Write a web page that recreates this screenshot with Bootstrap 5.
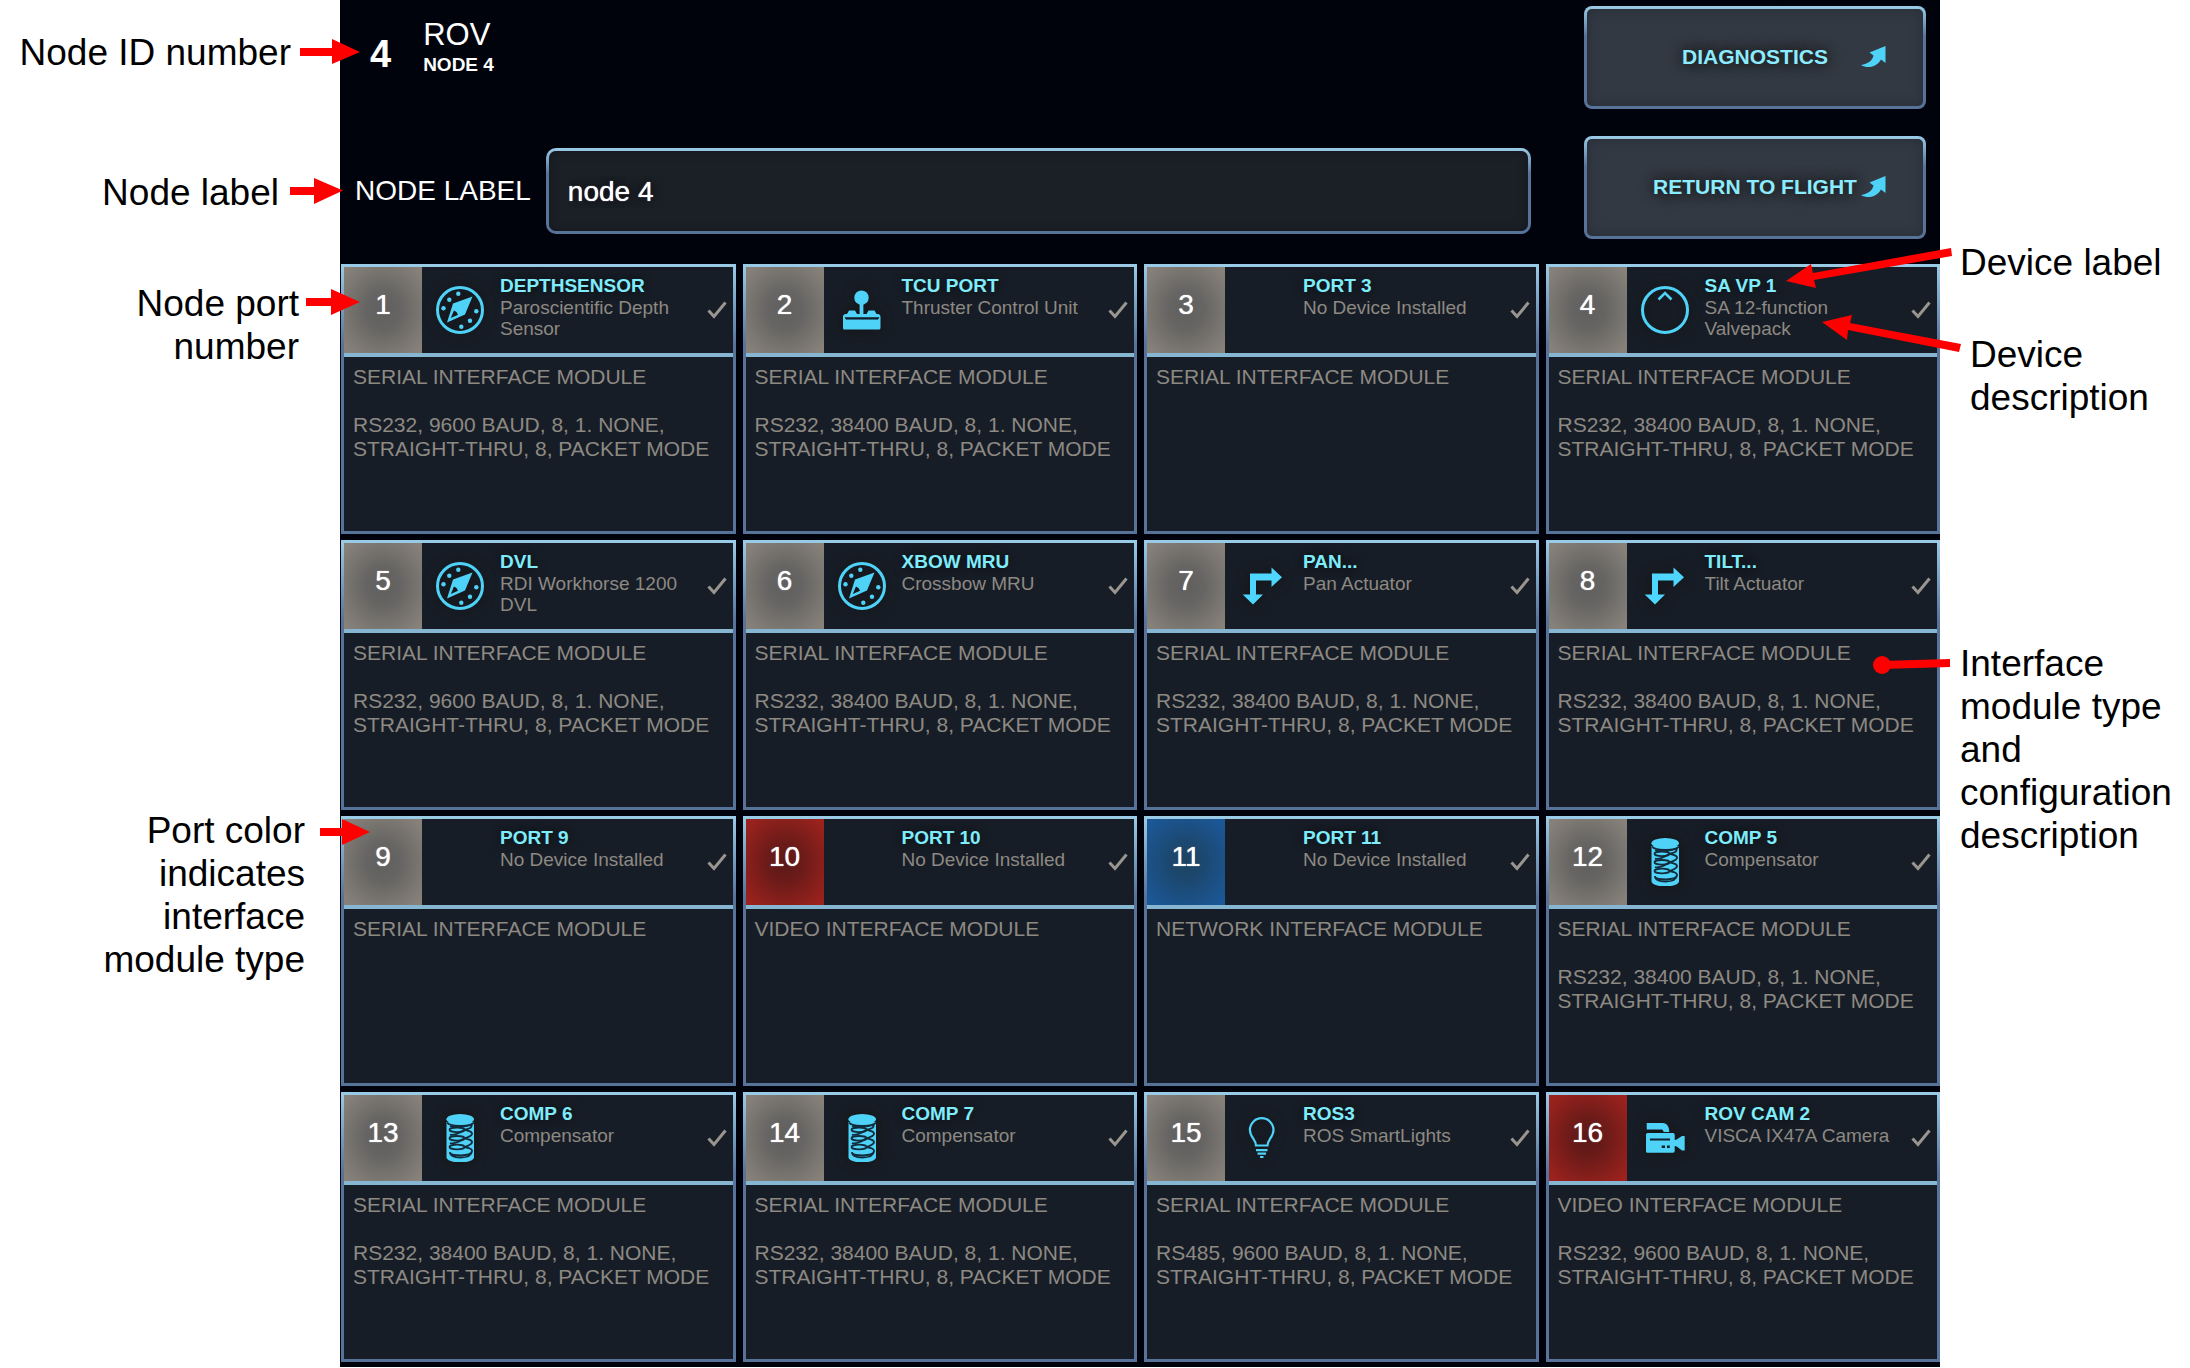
<!DOCTYPE html>
<html lang="en">
<head>
<meta charset="utf-8">
<meta name="viewport" content="width=device-width, initial-scale=1">
<title>ROV Node 4</title>
<link href="https://cdn.jsdelivr.net/npm/bootstrap@5.3.0/dist/css/bootstrap.min.css" rel="stylesheet">
<style>
:root{--edge-hi:#9accE8;--edge-lo:#58739a;--cyan:#4fd2f8;--dim:#8d8983;--fill:#171d26}
body{font-family:"Liberation Sans",Arial,sans-serif;background:#fff;color:#000}
.sheet{display:grid;grid-template-columns:minmax(0,340fr) minmax(0,1600fr) minmax(0,250fr)}
.note{font-size:37px;line-height:43px;margin:0}
.notes-left{padding-top:31px;text-align:right}
.notes-right{padding-top:241px;padding-left:20px}
.arrows{top:0;left:0;width:100%;pointer-events:none;z-index:5}
.console{background:#00030c;color:#fff;padding:6px 0 5px 1px}
.topbar{padding:0 14px 25px 0;gap:53px}
.ident{height:142px;padding:12px 0 0 29px;gap:32px}
.ident-num{font-size:38px;line-height:40px;font-weight:700}
.ident-name{font-size:31px;line-height:34px;font-weight:400;margin:0}
.ident-sub{font-size:19px;line-height:25px;font-weight:700}
.label-row{padding-left:14px;gap:15px;font-size:28px}
.edge{border:3px solid transparent;background:linear-gradient(var(--in),var(--in)) padding-box,linear-gradient(var(--edge-hi),var(--edge-lo) 30%,var(--edge-lo)) border-box}
.node-input,.node-input:focus{--in:#1b2027;font-size:28px;line-height:36px;height:86px;color:#fff;border-radius:10px;padding:2px 19px 0;box-shadow:inset 0 0 10px #14171c;text-shadow:0 0 1px #fff,0 0 12px #000;outline:0;flex:1 1 0;min-width:0}
.actions{width:342px;gap:27px}
.act{--in:#323943;height:103px;border-radius:8px;color:#8cecff;font-size:21px;line-height:24px;font-weight:700;display:grid;grid-template-columns:1fr auto 1fr;align-items:center;padding:0 37px 2px;text-shadow:0 0 14px #1c1a19,0 0 8px #221f1d;box-shadow:inset 0 0 12px rgba(30,36,44,.6)}
.act span{grid-column:2}
.act svg{justify-self:end;width:26px;height:22px;fill:var(--cyan)}
.ports{display:grid;grid-template-columns:repeat(4,minmax(0,1fr));gap:6px 7px}
.port{--in:var(--fill);min-height:270px;border-radius:0;color:var(--dim)}
.port-head{height:90px;border-bottom:4px solid #86b6d2}
.port-num{width:78px;flex:none;font-size:28px;line-height:32px;color:#fff;padding-bottom:10px;text-shadow:0 0 1px #fff;background:radial-gradient(closest-side,#5f5f5f,#666563 45%,#87817a 130%)}
.port-num.video{background:radial-gradient(closest-side,#5a1917,#6b1b19 45%,#9c221d 130%)}
.port-num.net{background:radial-gradient(closest-side,#1d425f,#1c4870 45%,#1b5898 130%)}
.port-icon{width:78px;flex:none;padding-right:2px}
.port-icon svg{width:48px;height:48px;filter:drop-shadow(0 0 6px #131313)}
.port-text{font-size:19px;line-height:21px;padding-top:8px}
.port-text h2{font-size:19px;line-height:22px;font-weight:700;color:#7eecfb;margin:0;text-shadow:0 0 10px #0b0d11}
.port-text p{margin:0}
.port-check{width:20px;height:18px;margin:0 6px 0 4px;flex:none;fill:none;stroke:#9a958f;stroke-width:3}
.port-body{padding:8px 6px 0 9px;font-size:21px;line-height:24px}
.port-body p{margin:0 0 24px}
</style>
</head>
<body>
<svg width="0" height="0" class="position-absolute" aria-hidden="true">
  <symbol id="i-compass" viewBox="0 0 48 48"><circle cx="24" cy="24" r="22.500" fill="none" stroke="#4fd2f8" stroke-width="3"/><g fill="#4fd2f8"><circle cx="22.300" cy="7.700" r="2.200"/><circle cx="13.300" cy="13.700" r="2.200"/><circle cx="7.500" cy="22.300" r="2.200"/><circle cx="40.300" cy="25.300" r="2.200"/><circle cx="34" cy="34.700" r="2.200"/><circle cx="25.300" cy="40.700" r="2.200"/><path fill-rule="evenodd" d="M36.500 10.500L17 17.500 11 36.500 29 28.500zM18 24.500L14.800 32 22 28.800 20.500 26z"/></g></symbol>
  <symbol id="i-joy" viewBox="0 0 48 48"><g fill="#4fd2f8"><circle cx="23.500" cy="11.700" r="7.200"/><path d="M21.600 17h3.800v12h-3.800z"/><path d="M5 42V31a3 3 0 0 1 3-3h1l2-3.600h6l2 3.600h9.500l2-3.600h6l2 3.600h1a3 3 0 0 1 3 3V42a1.500 1.500 0 0 1-1.500 1.500h-35A1.500 1.500 0 0 1 5 42z"/></g><path d="M7 31.600h34l-1 1.600H8z" fill="#10202c" stroke="#10202c" stroke-width=".6"/></symbol>
  <symbol id="i-turn" viewBox="0 0 48 48"><path fill="#4fd6ff" d="M11 11.500h21.500v-6L43 15.200 32.500 25v-6.500H17v14h7L14 42.500 3.700 32.500H11z"/></symbol>
  <symbol id="i-valve" viewBox="0 0 48 48"><g fill="none" stroke="#4fd2f8"><circle cx="24" cy="24" r="22.500" stroke-width="3"/><path d="M17.500 13.500L24 7l6.500 6.500" stroke-width="2.600"/></g></symbol>
  <symbol id="i-comp" viewBox="0 0 48 48"><path fill="#4fd2f8" d="M10.500 8h27.500v35c0 3.500-5.500 5.300-13.700 5.300s-13.800-1.800-13.800-5.300z"/><g fill="none" stroke="#132c3c" stroke-width="1.800"><path d="M11 8.500c3 4.500 24 4.500 27 0"/><ellipse cx="21" cy="15.800" rx="7.500" ry="2.300"/><ellipse cx="21" cy="24.300" rx="7.500" ry="2.300"/><ellipse cx="21" cy="33" rx="7.500" ry="2.300"/><path d="M14 12c5 1.500 17 1 21.500-1.500 1 4-4 4.500-7 5.300 4 .7 8 2 7.500 4.200s-4 3.300-7.500 4.300c4 .7 8 2 7.500 4.200s-4 3.300-7.500 4.500c4 .7 8 2 7.500 4.300s-5 4-11 4-10-1-11.500-2.500M14 38c0 4 4 5.500 10.500 5.500s11-2 11.500-6M14 20.500c3 1.500 10-1.500 14-4.500M14 29c3 1.500 10-1.500 14-4.500"/></g><ellipse cx="24.200" cy="5.200" rx="13.800" ry="5.200" fill="#4fd2f8"/></symbol>
  <symbol id="i-bulb" viewBox="0 0 48 48"><g fill="none" stroke="#4fd2f8" stroke-width="2.200"><path d="M17 31.500h11.500c0-6 6-8.500 6-15.500a11.800 11.800 0 0 0-23.600 0c0 7 6.100 9.500 6.100 15.500z"/><path d="M17 36.200h11.500M18.500 39.600h8.500M21 43h3.500"/></g></symbol>
  <symbol id="i-cam" viewBox="0 0 48 48"><path fill="#4fd2f8" d="M5.700 9h16c4.500 0 6.600 4 6.600 9H22.500c0-1.500-.8-2.500-2-2.500H5.700zM5 20.500q0-1.500 1.500-1.500H32q1.700 0 1.700 1.700V26l2-.500 5.300-3.500h2.700v14.500H41l-5.300-4-2-.500v5.100q0 1.700-1.700 1.700H6.500Q5 38.800 5 37.300z"/><path fill="#10202c" d="M9 24.600h20v2H9zM20.700 31.500H24V34h-3.300zM26 31.500h2.800V34H26z"/></symbol>
  <symbol id="i-check" viewBox="0 0 20 18"><path d="M1.500 9.500L7 15.500 18.500 1.500"/></symbol>
  <symbol id="i-go" viewBox="0 0 26 22"><path d="M25.500 0L9.500 6.500l4 3C12.500 14.500 8 18 1 19c7 4 16 2 20-5.500l4.500 3.500z"/></symbol>
</svg>

<div class="sheet position-relative">
  <aside class="notes-left">
    <p class="note" style="padding-right:49px">Node ID number</p>
    <p class="note" style="padding-right:61px;margin-top:97px">Node label</p>
    <p class="note" style="padding-right:41px;margin-top:68px">Node port<br>number</p>
    <p class="note" style="padding-right:35px;margin-top:441px">Port color<br>indicates<br>interface<br>module type</p>
  </aside>

  <main class="console">
    <header class="topbar d-flex">
      <div class="flex-grow-1">
        <div class="ident d-flex">
          <span class="ident-num pt-3">4</span>
          <div>
            <h1 class="ident-name">ROV</h1>
            <div class="ident-sub">NODE 4</div>
          </div>
        </div>
        <div class="label-row d-flex align-items-center">
          <label for="nodeLabel">NODE LABEL</label>
          <input id="nodeLabel" type="text" class="node-input edge" value="node 4">
        </div>
      </div>
      <div class="actions d-flex flex-column">
        <button type="button" class="btn act edge"><span>DIAGNOSTICS</span><svg><use href="#i-go"/></svg></button>
        <button type="button" class="btn act edge"><span>RETURN TO FLIGHT</span><svg><use href="#i-go"/></svg></button>
      </div>
    </header>

    <section class="ports">
      <article class="port edge">
        <div class="port-head d-flex"><div class="port-num d-flex align-items-center justify-content-center">1</div><div class="port-icon d-flex align-items-center justify-content-center"><svg><use href="#i-compass"/></svg></div><div class="port-text flex-grow-1"><h2>DEPTHSENSOR</h2><p>Paroscientific Depth Sensor</p></div><svg class="port-check align-self-center"><use href="#i-check"/></svg></div>
        <div class="port-body"><p>SERIAL INTERFACE MODULE</p><p>RS232, 9600 BAUD, 8, 1. NONE, STRAIGHT-THRU, 8, PACKET MODE</p></div>
      </article>
      <article class="port edge">
        <div class="port-head d-flex"><div class="port-num d-flex align-items-center justify-content-center">2</div><div class="port-icon d-flex align-items-center justify-content-center"><svg><use href="#i-joy"/></svg></div><div class="port-text flex-grow-1"><h2>TCU PORT</h2><p>Thruster Control Unit</p></div><svg class="port-check align-self-center"><use href="#i-check"/></svg></div>
        <div class="port-body"><p>SERIAL INTERFACE MODULE</p><p>RS232, 38400 BAUD, 8, 1. NONE, STRAIGHT-THRU, 8, PACKET MODE</p></div>
      </article>
      <article class="port edge">
        <div class="port-head d-flex"><div class="port-num d-flex align-items-center justify-content-center">3</div><div class="port-icon"></div><div class="port-text flex-grow-1"><h2>PORT 3</h2><p>No Device Installed</p></div><svg class="port-check align-self-center"><use href="#i-check"/></svg></div>
        <div class="port-body"><p>SERIAL INTERFACE MODULE</p></div>
      </article>
      <article class="port edge">
        <div class="port-head d-flex"><div class="port-num d-flex align-items-center justify-content-center">4</div><div class="port-icon d-flex align-items-center justify-content-center"><svg><use href="#i-valve"/></svg></div><div class="port-text flex-grow-1"><h2>SA VP 1</h2><p>SA 12-function<br>Valvepack</p></div><svg class="port-check align-self-center"><use href="#i-check"/></svg></div>
        <div class="port-body"><p>SERIAL INTERFACE MODULE</p><p>RS232, 38400 BAUD, 8, 1. NONE, STRAIGHT-THRU, 8, PACKET MODE</p></div>
      </article>

      <article class="port edge">
        <div class="port-head d-flex"><div class="port-num d-flex align-items-center justify-content-center">5</div><div class="port-icon d-flex align-items-center justify-content-center"><svg><use href="#i-compass"/></svg></div><div class="port-text flex-grow-1"><h2>DVL</h2><p>RDI Workhorse 1200 DVL</p></div><svg class="port-check align-self-center"><use href="#i-check"/></svg></div>
        <div class="port-body"><p>SERIAL INTERFACE MODULE</p><p>RS232, 9600 BAUD, 8, 1. NONE, STRAIGHT-THRU, 8, PACKET MODE</p></div>
      </article>
      <article class="port edge">
        <div class="port-head d-flex"><div class="port-num d-flex align-items-center justify-content-center">6</div><div class="port-icon d-flex align-items-center justify-content-center"><svg><use href="#i-compass"/></svg></div><div class="port-text flex-grow-1"><h2>XBOW MRU</h2><p>Crossbow MRU</p></div><svg class="port-check align-self-center"><use href="#i-check"/></svg></div>
        <div class="port-body"><p>SERIAL INTERFACE MODULE</p><p>RS232, 38400 BAUD, 8, 1. NONE, STRAIGHT-THRU, 8, PACKET MODE</p></div>
      </article>
      <article class="port edge">
        <div class="port-head d-flex"><div class="port-num d-flex align-items-center justify-content-center">7</div><div class="port-icon d-flex align-items-center justify-content-center"><svg><use href="#i-turn"/></svg></div><div class="port-text flex-grow-1"><h2>PAN...</h2><p>Pan Actuator</p></div><svg class="port-check align-self-center"><use href="#i-check"/></svg></div>
        <div class="port-body"><p>SERIAL INTERFACE MODULE</p><p>RS232, 38400 BAUD, 8, 1. NONE, STRAIGHT-THRU, 8, PACKET MODE</p></div>
      </article>
      <article class="port edge">
        <div class="port-head d-flex"><div class="port-num d-flex align-items-center justify-content-center">8</div><div class="port-icon d-flex align-items-center justify-content-center"><svg><use href="#i-turn"/></svg></div><div class="port-text flex-grow-1"><h2>TILT...</h2><p>Tilt Actuator</p></div><svg class="port-check align-self-center"><use href="#i-check"/></svg></div>
        <div class="port-body"><p>SERIAL INTERFACE MODULE</p><p>RS232, 38400 BAUD, 8, 1. NONE, STRAIGHT-THRU, 8, PACKET MODE</p></div>
      </article>

      <article class="port edge">
        <div class="port-head d-flex"><div class="port-num d-flex align-items-center justify-content-center">9</div><div class="port-icon"></div><div class="port-text flex-grow-1"><h2>PORT 9</h2><p>No Device Installed</p></div><svg class="port-check align-self-center"><use href="#i-check"/></svg></div>
        <div class="port-body"><p>SERIAL INTERFACE MODULE</p></div>
      </article>
      <article class="port edge">
        <div class="port-head d-flex"><div class="port-num video d-flex align-items-center justify-content-center">10</div><div class="port-icon"></div><div class="port-text flex-grow-1"><h2>PORT 10</h2><p>No Device Installed</p></div><svg class="port-check align-self-center"><use href="#i-check"/></svg></div>
        <div class="port-body"><p>VIDEO INTERFACE MODULE</p></div>
      </article>
      <article class="port edge">
        <div class="port-head d-flex"><div class="port-num net d-flex align-items-center justify-content-center">11</div><div class="port-icon"></div><div class="port-text flex-grow-1"><h2>PORT 11</h2><p>No Device Installed</p></div><svg class="port-check align-self-center"><use href="#i-check"/></svg></div>
        <div class="port-body"><p>NETWORK INTERFACE MODULE</p></div>
      </article>
      <article class="port edge">
        <div class="port-head d-flex"><div class="port-num d-flex align-items-center justify-content-center">12</div><div class="port-icon d-flex align-items-center justify-content-center"><svg><use href="#i-comp"/></svg></div><div class="port-text flex-grow-1"><h2>COMP 5</h2><p>Compensator</p></div><svg class="port-check align-self-center"><use href="#i-check"/></svg></div>
        <div class="port-body"><p>SERIAL INTERFACE MODULE</p><p>RS232, 38400 BAUD, 8, 1. NONE, STRAIGHT-THRU, 8, PACKET MODE</p></div>
      </article>

      <article class="port edge">
        <div class="port-head d-flex"><div class="port-num d-flex align-items-center justify-content-center">13</div><div class="port-icon d-flex align-items-center justify-content-center"><svg><use href="#i-comp"/></svg></div><div class="port-text flex-grow-1"><h2>COMP 6</h2><p>Compensator</p></div><svg class="port-check align-self-center"><use href="#i-check"/></svg></div>
        <div class="port-body"><p>SERIAL INTERFACE MODULE</p><p>RS232, 38400 BAUD, 8, 1. NONE, STRAIGHT-THRU, 8, PACKET MODE</p></div>
      </article>
      <article class="port edge">
        <div class="port-head d-flex"><div class="port-num d-flex align-items-center justify-content-center">14</div><div class="port-icon d-flex align-items-center justify-content-center"><svg><use href="#i-comp"/></svg></div><div class="port-text flex-grow-1"><h2>COMP 7</h2><p>Compensator</p></div><svg class="port-check align-self-center"><use href="#i-check"/></svg></div>
        <div class="port-body"><p>SERIAL INTERFACE MODULE</p><p>RS232, 38400 BAUD, 8, 1. NONE, STRAIGHT-THRU, 8, PACKET MODE</p></div>
      </article>
      <article class="port edge">
        <div class="port-head d-flex"><div class="port-num d-flex align-items-center justify-content-center">15</div><div class="port-icon d-flex align-items-center justify-content-center"><svg><use href="#i-bulb"/></svg></div><div class="port-text flex-grow-1"><h2>ROS3</h2><p>ROS SmartLights</p></div><svg class="port-check align-self-center"><use href="#i-check"/></svg></div>
        <div class="port-body"><p>SERIAL INTERFACE MODULE</p><p>RS485, 9600 BAUD, 8, 1. NONE, STRAIGHT-THRU, 8, PACKET MODE</p></div>
      </article>
      <article class="port edge">
        <div class="port-head d-flex"><div class="port-num video d-flex align-items-center justify-content-center">16</div><div class="port-icon d-flex align-items-center justify-content-center"><svg><use href="#i-cam"/></svg></div><div class="port-text flex-grow-1"><h2>ROV CAM 2</h2><p>VISCA IX47A Camera</p></div><svg class="port-check align-self-center"><use href="#i-check"/></svg></div>
        <div class="port-body"><p>VIDEO INTERFACE MODULE</p><p>RS232, 9600 BAUD, 8, 1. NONE, STRAIGHT-THRU, 8, PACKET MODE</p></div>
      </article>
    </section>
  </main>

  <aside class="notes-right">
    <p class="note">Device label</p>
    <p class="note" style="padding-left:10px;margin-top:49px">Device<br>description</p>
    <p class="note" style="margin-top:223px">Interface<br>module type<br>and<br>configuration<br>description</p>
  </aside>

  <svg class="arrows position-absolute" viewBox="0 0 2190 1367" fill="#f00" stroke="none" aria-hidden="true">
    <path d="M300 48h32v-9l28 13-28 12v-8h-32z"/>
    <path d="M290 187h24v-9l29 12.500-29 13.500v-9h-24z"/>
    <path d="M306 298h25v-9l29 13-29 13v-9h-25z"/>
    <path d="M320 828h22v-9l28 13-28 13v-9h-22z"/>
    <path d="M1786 281l25-17 2 9 138-25 1 8-138 24 2 8z"/>
    <path d="M1822 322l30-7-2 8 111 21-2 8-111-22-1 10z"/>
    <circle cx="1882" cy="665" r="9"/><path d="M1882 661l68-2v8l-68 2z"/>
  </svg>
</div>
<script src="https://cdn.jsdelivr.net/npm/bootstrap@5.3.0/dist/js/bootstrap.bundle.min.js"></script>
</body>
</html>
